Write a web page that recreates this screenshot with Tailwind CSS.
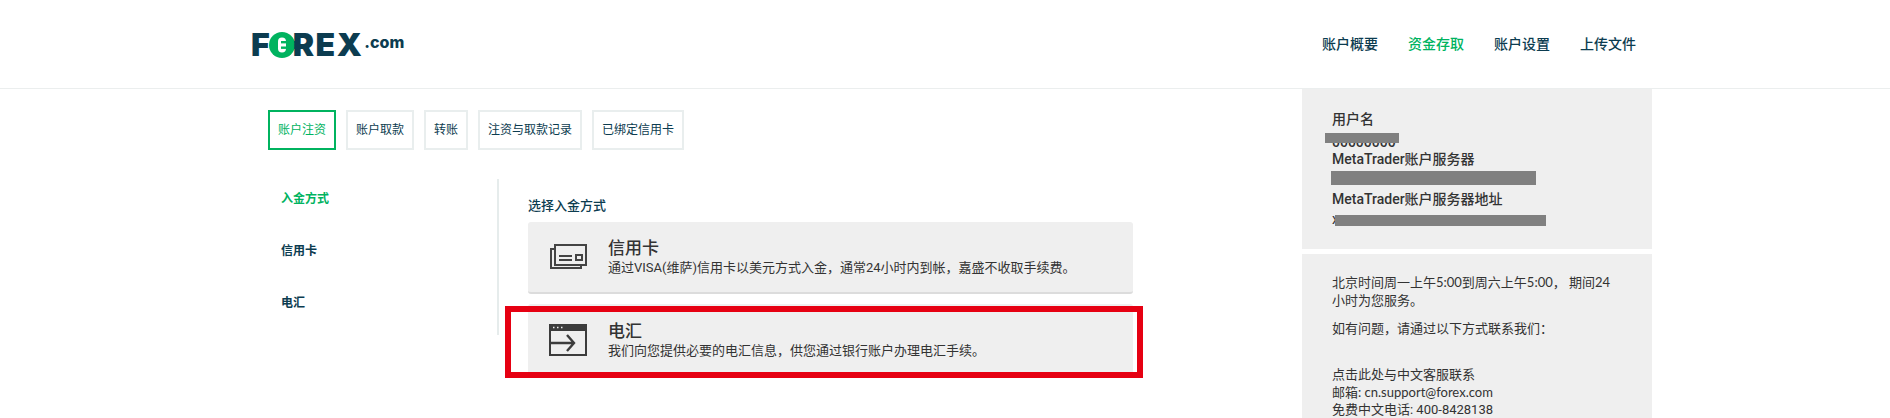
<!DOCTYPE html>
<html lang="zh-CN">
<head>
    <meta charset="UTF-8" />
    <title>FOREX.com</title>
    <script src="https://cdn.jsdelivr.net/npm/@tailwindcss/browser@4"></script>
</head>
<body class="relative h-[418px] overflow-hidden bg-white font-['Roboto','Noto_Sans_CJK_SC',sans-serif] text-[#0c3c50]">

    <!-- header -->
    <header class="h-[89px] border-b border-[#ebeeee] flex items-center justify-between pl-[251px] pr-[254px]">
        <div class="flex items-center h-[24px] mt-[1px] font-['Inter',sans-serif] font-black text-[#0c3c50]">
            <span class="text-[32px] leading-none">F</span>
            <svg class="w-[26px] h-[26px] ml-[-1px] mr-[-2px] shrink-0" viewBox="0 0 26 26">
                <circle cx="13" cy="13" r="13" fill="#00b35f"/>
                <rect x="9" y="5.5" width="8" height="15" rx="4" fill="#fff"/>
                <rect x="12" y="9" width="14" height="2.4" fill="#00b35f"/>
                <rect x="12" y="14.5" width="14" height="2.4" fill="#00b35f"/>
            </svg>
            <span class="text-[32px] leading-none tracking-[1.5px]">REX</span>
            <span class="text-[16px] leading-none ml-[1px] mt-[-5px] font-extrabold">.com</span>
        </div>
        <nav class="flex gap-[30px] text-[14px] font-medium leading-none">
            <a>账户概要</a>
            <a class="text-[#00b35f]">资金存取</a>
            <a>账户设置</a>
            <a>上传文件</a>
        </nav>
    </header>

    <div class="flex">
        <!-- left content -->
        <main class="w-[1034px] ml-[268px] pt-[21px]">
            <div class="flex gap-[10px] text-[12px] leading-none">
                <a class="h-[40px] px-[8px] flex items-center border-2 border-[#00b35f] text-[#00b35f]">账户注资</a>
                <a class="h-[40px] px-[8px] flex items-center border-2 border-[#e9eeee]">账户取款</a>
                <a class="h-[40px] px-[8px] flex items-center border-2 border-[#e9eeee]">转账</a>
                <a class="h-[40px] px-[8px] flex items-center border-2 border-[#e9eeee]">注资与取款记录</a>
                <a class="h-[40px] px-[8px] flex items-center border-2 border-[#e9eeee]">已绑定信用卡</a>
            </div>

            <div class="flex mt-[29px]">
                <aside class="w-[231px] h-[156px] border-r-2 border-[#e6ecec] pl-[13px] pt-[11px] flex flex-col gap-[34px] text-[12px] font-bold leading-[18px]">
                    <a class="text-[#00b35f]">入金方式</a>
                    <a>信用卡</a>
                    <a>电汇</a>
                </aside>

                <section class="w-[605px] ml-[29px] pt-[18px]">
                    <h2 class="text-[13px] font-medium leading-[18px]">选择入金方式</h2>
                    <div class="mt-[7px] h-[72px] bg-[#efefef] rounded-[3px] border-b-2 border-[#dcdcdc] flex items-center pl-[22px] text-[#333]">
                        <svg class="w-[37px] h-[26px] shrink-0" viewBox="0 0 37 26" fill="none" stroke="#444" stroke-width="2">
                            <path d="M5 5H1V24H31V20"/>
                            <rect x="5" y="1" width="31" height="20" fill="#efefef"/>
                            <path d="M9 12H22M9 16H22"/>
                            <rect x="26" y="11" width="6" height="5"/>
                        </svg>
                        <div class="ml-[21px] mt-[-1px]">
                            <h3 class="text-[17px] font-medium leading-[22px]">信用卡</h3>
                            <p class="text-[13px] leading-[18px]">通过VISA(维萨)信用卡以美元方式入金，通常24小时内到帐，嘉盛不收取手续费。</p>
                        </div>
                    </div>
                    <div class="mt-[10px] h-[72px] bg-[#efefef] rounded-[3px] flex items-center pl-[21px] text-[#333]">
                        <svg class="w-[38px] h-[32px] shrink-0" viewBox="0 0 38 32" fill="none" stroke="#3c3c3c" stroke-width="2">
                            <rect x="1" y="1" width="36" height="30"/>
                            <rect x="1" y="1" width="36" height="5" fill="#3c3c3c"/>
                            <path d="M1 19H24M18 11L25 19L18 27" stroke-width="2.4"/>
                            <path d="M4 3.5H5.5M8 3.5H9.5M12 3.5H13.5" stroke="#efefef" stroke-width="1.6"/>
                        </svg>
                        <div class="ml-[21px] mt-[-1px]">
                            <h3 class="text-[17px] font-medium leading-[22px]">电汇</h3>
                            <p class="text-[13px] leading-[18px]">我们向您提供必要的电汇信息，供您通过银行账户办理电汇手续。</p>
                        </div>
                    </div>
                </section>
            </div>
        </main>

        <!-- right panels -->
        <aside class="w-[350px] flex flex-col gap-[5px] text-[#333]">
            <div class="relative h-[160px] bg-[#efefef] pl-[30px] pt-[20px] text-[14px] font-medium leading-[20px]">
                <p>用户名</p>
                <p class="h-[20px] pt-[3px]">00000000</p>
                <p>MetaTrader账户服务器</p>
                <p class="h-[20px] pt-[1px]">xxxxxxxxxxxxxxxxxxxxxxxxxx</p>
                <p>MetaTrader账户服务器地址</p>
                <p class="h-[20px] font-normal">xxxxxxxxxxxxxxxxxxxxxxxxxxxx</p>
                <div class="absolute left-[23px] top-[44px] w-[74px] h-[10px] bg-[#808080]"></div>
                <div class="absolute left-[29px] top-[82px] w-[205px] h-[14px] bg-[#808080]"></div>
                <div class="absolute left-[33px] top-[126px] w-[211px] h-[11px] bg-[#808080]"></div>
            </div>
            <div class="h-[164px] bg-[#efefef] pl-[30px] pr-[32px] pt-[19px] text-[13px] leading-[18px] overflow-hidden font-['Lato','Noto_Sans_CJK_SC',sans-serif]">
                <p>北京时间周一上午5:00到周六上午5:00， 期间24小时为您服务。</p>
                <p class="mt-[10px]">如有问题，请通过以下方式联系我们：</p>
                <p class="mt-[28px]">点击此处与中文客服联系</p>
                <p>邮箱: cn.support@forex.com</p>
                <p class="font-['Roboto','Noto_Sans_CJK_SC',sans-serif]">免费中文电话: 400-8428138</p>
            </div>
        </aside>
    </div>

    <!-- red annotation box -->
    <div class="absolute left-[505px] top-[306px] w-[638px] h-[72px] border-[6px] border-[#e60012]"></div>
</body>
</html>
